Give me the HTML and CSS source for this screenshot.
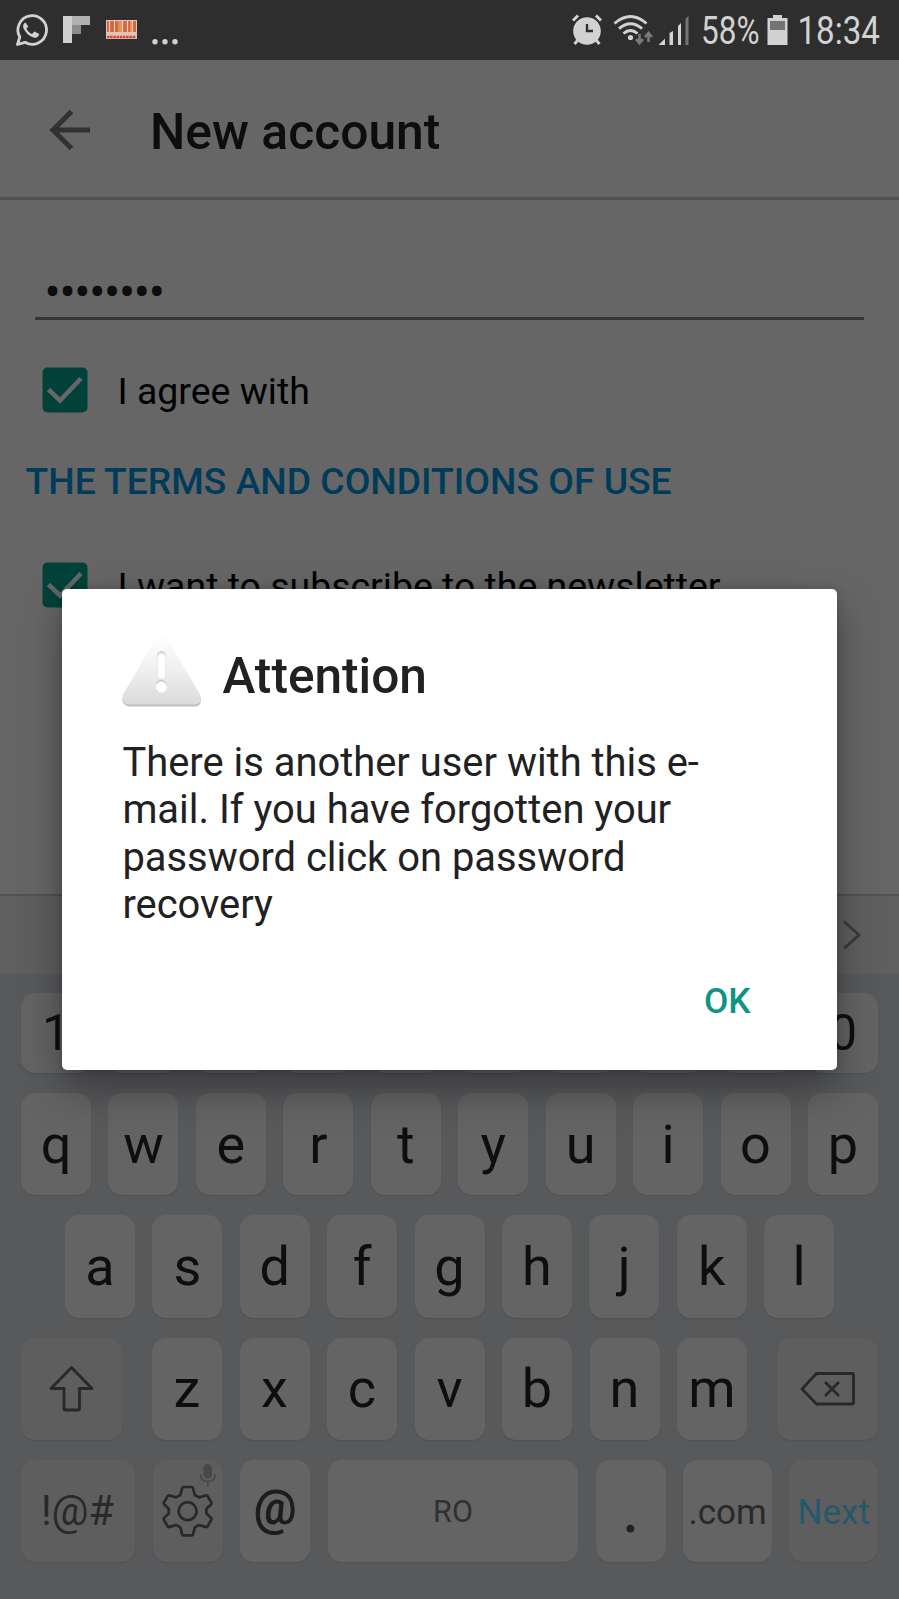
FILE: index.html
```html
<!DOCTYPE html>
<html lang="en">
<head>
<meta charset="utf-8">
<title>New account</title>
<link rel="stylesheet" href="styles.css">
</head>
<body>
<div class="phone">
  <header class="status">
    <svg class="status-icons" width="300" height="60" viewBox="0 0 300 60">
      <path d="M17.500 44.500 19.800 37A14.300 14.300 0 1 1 25 42.300Z" fill="none" stroke="#d2d2d2" stroke-width="2.800" stroke-linejoin="round"/>
      <path d="M25.500 22.500c-2.600 1.200-3 4-1.500 6.800 2 4 5.500 7 9.600 8.200 3 .8 5.200-.8 5.600-3.500l-4.700-2.600-2.500 2.600c-2.600-1-4.500-3-5.600-5.400l1.900-2z" fill="#d2d2d2"/>
      <path d="M63 16h9v27h-9z" fill="#cfcfcf"/><path d="M72 16h18v9H72z" fill="#b0b0b0"/><path d="M72 25h9v9h-9z" fill="#8c8c8c"/>
      <rect x="106" y="20" width="31" height="19" fill="#e3c3b6"/>
      <path d="M107 21h29v11h-29z" fill="#d9623f"/>
      <path d="M109.500 21v11m5-11v11m8-11v11m5-11v11m5-11v11" stroke="#f3d3bd" stroke-width="1.200"/>
      <path d="M119 21v11m2-11v11m10-11v11" stroke="#f5ad67" stroke-width="1.200"/>
      <path d="M107 37h29" stroke="#c84c3b" stroke-width="2.400" stroke-dasharray="2.500 .7"/>
      <g fill="#d2d2d2"><circle cx="155" cy="41.700" r="2.700"/><circle cx="165" cy="41.700" r="2.700"/><circle cx="175" cy="41.700" r="2.700"/></g>
    </svg>
    <svg class="status-icons" width="339" height="60" viewBox="560 0 339 60">
      <g fill="#d2d2d2">
        <circle cx="587" cy="31" r="13.800"/>
        <path d="M573 20.500l5-5M601 20.500l-5-5" stroke="#d2d2d2" stroke-width="3"/>
        <path d="M578 40l-3.500 4M596 40l3.500 4" stroke="#d2d2d2" stroke-width="3"/>
        <path d="M587 24v7h6" fill="none" stroke="#2e2e2e" stroke-width="2.400"/>
        <circle cx="630.500" cy="37.500" r="2.600"/>
      </g>
      <g fill="none" stroke="#d2d2d2" stroke-width="2.900">
        <path d="M614.500 23.500q16-14 32 0M619 28.700q11.500-10 23 0M623.500 33.500q7-6 14 0"/>
      </g>
      <path d="M639.500 34v9m-3.500-3.800 3.500 4 3.500-4M648.500 42v-9m-3.500 4 3.500-4 3.500 4" fill="none" stroke="#7a7a7a" stroke-width="2.600"/>
      <path d="M658.500 45l6.500-6.500V45zM669.500 45V33l3.500-2v14zM678 45V26l3-3v22z" fill="#d2d2d2"/>
      <path d="M685.500 45V18.500l3-2.500v29z" fill="#747474"/>
      <text x="701" y="44.300" textLength="58.500" lengthAdjust="spacingAndGlyphs" class="status-text">58%</text>
      <path d="M773 15h9v3h5.500v27h-20V18h5.500z" fill="#d2d2d2"/><path d="M770 21h15v9h-15z" fill="#747474"/>
      <text x="797.500" y="44.300" textLength="82.500" lengthAdjust="spacingAndGlyphs" class="status-text">18:34</text>
    </svg>
  </header>

  <div class="appbar">
    <svg width="42" height="42" viewBox="0 0 42 42"><path d="M41 21H5M22.500 2.500 4 21l18.500 18.500" fill="none" stroke="#313131" stroke-width="5"/></svg>
    <h1>New account</h1>
  </div>

  <main class="form">
    <div class="password">••••••••</div>
    <div class="check first">
      <svg width="46" height="46" viewBox="0 0 46 46"><rect x=".5" y=".5" width="45" height="45" rx="5" fill="#00423a"/><path d="M6.500 22.500 18 33.500 39 11.500" fill="none" stroke="#666" stroke-width="4.600"/></svg>
      <span>I agree with</span>
    </div>
    <div class="terms">THE TERMS AND CONDITIONS OF USE</div>
    <div class="check">
      <svg width="46" height="46" viewBox="0 0 46 46"><rect x=".5" y=".5" width="45" height="45" rx="5" fill="#00423a"/><path d="M6.500 22.500 18 33.500 39 11.500" fill="none" stroke="#666" stroke-width="4.600"/></svg>
      <span>I want to subscribe to the newsletter</span>
    </div>
  </main>

  <div class="suggest">
    <svg width="20" height="32" viewBox="0 0 20 32"><path d="M2 2.500 17 16 2 29.500" fill="none" stroke="#3a3a3a" stroke-width="2.800"/></svg>
  </div>

  <section class="keyboard">
    <div class="row digits"><b>1</b><b>2</b><b>3</b><b>4</b><b>5</b><b>6</b><b>7</b><b>8</b><b>9</b><b>0</b></div>
    <div class="row"><b>q</b><b>w</b><b>e</b><b>r</b><b>t</b><b>y</b><b>u</b><b>i</b><b>o</b><b>p</b></div>
    <div class="row home"><b>a</b><b>s</b><b>d</b><b>f</b><b>g</b><b>h</b><b>j</b><b>k</b><b>l</b></div>
    <div class="row lower">
      <b class="fn wide"><svg width="46" height="48" viewBox="0 0 46 48"><path d="M22.500 2.500 43 23.500H30.500V44q0 1-1 1H16q-1 0-1-1V23.500H2z" fill="none" stroke="#282828" stroke-width="2.800" stroke-linejoin="round"/></svg></b>
      <div class="letters"><b>z</b><b>x</b><b>c</b><b>v</b><b>b</b><b>n</b><b>m</b></div>
      <b class="fn wide"><svg width="56" height="36" viewBox="0 0 56 36"><path d="M16.500 2.500H52.500q1 0 1 1V32q0 1-1 1H16.500L2 18z" fill="none" stroke="#282828" stroke-width="2.800" stroke-linejoin="round"/><path d="M25 11l14 14m0-14L25 25" stroke="#282828" stroke-width="2.800"/></svg></b>
    </div>
    <div class="row bottom">
      <b class="fn"><svg width="114" height="102" viewBox="21 1460 114 102"><text x="41" y="1525" textLength="73" lengthAdjust="spacingAndGlyphs" class="symbols">!@#</text></svg></b>
      <b class="fn"><svg width="70" height="102" viewBox="152 1460 70 102">
        <path d="M182.800 1487h7.600q1.500 0 1.800 1.500l1.600 6.500 4.200 2.400 6.500-1.900q1.500-.5 2.300.9l3.400 6q.7 1.300-.5 2.400l-4.300 4v4.800l4.300 4q1.200 1.100.5 2.400l-3.400 6q-.8 1.400-2.300.9l-6.500-1.900-4.200 2.400-1.600 6.500q-.3 1.500-1.800 1.500h-7.600q-1.500 0-1.800-1.500l-1.600-6.500-4.200-2.400-6.500 1.900q-1.500.5-2.300-.9l-3.400-6q-.7-1.300.5-2.400l4.300-4v-4.800l-4.300-4q-1.200-1.100-.5-2.400l3.400-6q.8-1.400 2.300-.9l6.500 1.900 4.200-2.400 1.600-6.500q.3-1.500 1.800-1.500z" fill="none" stroke="#282828" stroke-width="2.700" stroke-linejoin="round"/>
        <circle cx="186.600" cy="1511.200" r="9" fill="none" stroke="#282828" stroke-width="2.700"/>
        <rect x="202.500" y="1464" width="8.500" height="14.500" rx="4.200" fill="#484848"/>
        <path d="M199.500 1474q0 7.500 7.300 7.500t7.300-7.500M206.800 1481.500v5" fill="none" stroke="#484848" stroke-width="1.600"/>
      </svg></b>
      <b class="at"><svg width="70" height="102" viewBox="240 1460 70 102"><text x="253.500" y="1523.500" textLength="43" lengthAdjust="spacingAndGlyphs">@</text></svg></b>
      <b class="space">RO</b>
      <b class="dot">.</b>
      <b class="com">.com</b>
      <b class="fn next">Next</b>
    </div>
  </section>

  <div class="dialog">
    <div class="dialog-head">
      <svg width="82" height="76" viewBox="0 0 82 76">
        <defs><linearGradient id="tri" x1="0" y1="0" x2="0" y2="1"><stop offset="0" stop-color="#ffffff"/><stop offset=".5" stop-color="#f0f0f0"/><stop offset="1" stop-color="#dadada"/></linearGradient></defs>
        <path d="M74 72.500H7Q-2 70 1 63L10 61H70L78 63Q81 70.500 74 72.500z" fill="#c0c0c0"/>
        <path d="M34.500 3Q39.500 -2 44.500 3L78 60.500Q81.500 70 72.500 70.500H7.500Q-1.500 70 1 60.500z" fill="url(#tri)"/>
        <rect x="35" y="17" width="9" height="26" rx="4.500" fill="#d6d6d6"/><rect x="35.500" y="19.500" width="8" height="24.500" rx="4" fill="#fff"/>
        <circle cx="39.500" cy="51.500" r="5.700" fill="#cacaca"/><circle cx="39.500" cy="53" r="5.500" fill="#fff"/>
      </svg>
      <h2>Attention</h2>
    </div>
    <p>There is another user with this e-<br>mail. If you have forgotten your<br>password click on password<br>recovery</p>
    <div class="actions"><span>OK</span></div>
  </div>
</div>
</body>
</html>
```
FILE: styles.css
```css
* { box-sizing: border-box; }
body { margin: 0; font-family: Roboto, "Liberation Sans", sans-serif; background: #666; }
svg { display: block; flex: none; }
h1, h2, p { margin: 0; font-weight: 500; }

.phone { position: relative; width: 899px; height: 1599px; overflow: hidden; display: flex; flex-direction: column; background: #666; }

.status { height: 60px; flex: none; display: flex; justify-content: space-between; background: #2e2e2e; }
.status-text { font-size: 38px; fill: #d2d2d2; }

.appbar { height: 140px; flex: none; display: flex; align-items: center; gap: 59px; padding: 0 0 0 49px; border-bottom: 3px solid #505050; }
.appbar svg { margin-top: 2px; }
.appbar h1 { font-size: 49.800px; line-height: 60px; margin-top: 7px; color: #0d0d0d; }

.form { flex: 1; min-height: 0; }
.password { margin: 60px 35px 0; height: 60px; padding: 1px 0 0 9.500px; font-size: 48px; letter-spacing: -1.300px; line-height: 64px; color: #0d0d0d; border-bottom: 3px solid #373737; }
.check { display: flex; align-items: center; gap: 29.500px; height: 46px; padding-left: 42px; font-size: 37.450px; line-height: 46px; color: #000; }
.check.first { margin-top: 47px; }
.check span { padding-top: 2px; white-space: nowrap; }
.terms { height: 50px; margin: 43px 0 56px 25.500px; font-size: 37.250px; line-height: 50px; font-weight: 500; color: #003b5a; white-space: nowrap; }

.suggest { height: 80px; flex: none; display: flex; align-items: center; justify-content: flex-end; padding-right: 37px; background: #5f5f5f; border-top: 2px solid #525252; }

.keyboard { height: 625px; flex: none; display: flex; flex-direction: column; gap: 20.200px; padding: 18.800px 21px 0 21px; background: #58595b; }
.row { display: flex; justify-content: space-between; height: 102.200px; flex: none; }
.row.digits { height: 80px; }
.row.digits b { font-size: 50px; }
.row.home { padding: 0 44px; }
.row b { display: flex; align-items: center; justify-content: center; width: 70px; background: #646464; border-radius: 14px; box-shadow: 0 1px 1px #505153; font-weight: 400; font-size: 54px; color: #0e0e0e; }
.row b.fn { background: #5e5e5e; }
.row b.wide { width: 101px; }
.letters { display: flex; justify-content: space-between; width: 595px; }
.row.bottom { justify-content: flex-start; gap: 17.500px; }
.bottom b:first-child { width: 114px; }
.symbols { font-size: 42px; fill: #292929; }
.at text { font-size: 49px; fill: #1c1c1c; stroke: #1c1c1c; stroke-width: 1px; }
.row b.space { width: 252px; font-size: 30.500px; color: #303030; padding-top: 1px; }
.row b.dot { color: #222; font-size: 70px; padding: 0 0 6px; }
.row b.com { width: 89px; font-size: 35px; color: #292929; padding-top: 2px; }
.row b.next { width: 89px; font-size: 35px; color: #25586a; padding-top: 2px; }

.dialog { position: absolute; left: 62.400px; top: 589px; width: 774.200px; height: 481px; padding: 45px 60px 0; background: #fff; border-radius: 5px; box-shadow: 0 18px 42px rgba(0,0,0,.36), 0 0 8px rgba(0,0,0,.15); }
.dialog-head { display: flex; align-items: center; gap: 18px; height: 76px; }
.dialog h2 { font-size: 49.600px; line-height: 60px; margin-top: 8px; color: #212121; }
.dialog p { margin-top: 28.800px; font-size: 39.900px; line-height: 47.550px; font-weight: 400; color: #212121; white-space: nowrap; }
.actions { display: flex; justify-content: flex-end; padding: 52.500px 26px 0 0; font-size: 35.300px; line-height: 40px; font-weight: 500; color: #0e9385; }
```
